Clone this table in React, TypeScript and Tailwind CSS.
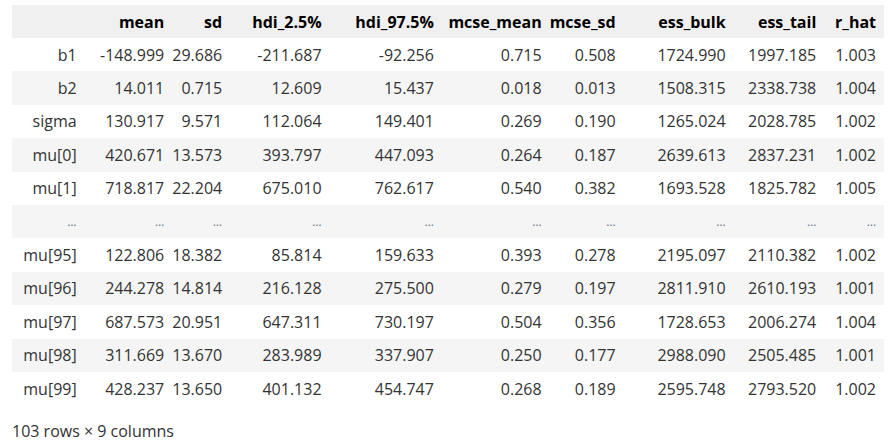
const columns = ["mean", "sd", "hdi_2.5%", "hdi_97.5%", "mcse_mean", "mcse_sd", "ess_bulk", "ess_tail", "r_hat"];

const widths = [73, 88, 54, 100, 113, 108, 74, 111, 91, 60];

const rows: [string, string[]][] = [
  ["b1", ["-148.999", "29.686", "-211.687", "-92.256", "0.715", "0.508", "1724.990", "1997.185", "1.003"]],
  ["b2", ["14.011", "0.715", "12.609", "15.437", "0.018", "0.013", "1508.315", "2338.738", "1.004"]],
  ["sigma", ["130.917", "9.571", "112.064", "149.401", "0.269", "0.190", "1265.024", "2028.785", "1.002"]],
  ["mu[0]", ["420.671", "13.573", "393.797", "447.093", "0.264", "0.187", "2639.613", "2837.231", "1.002"]],
  ["mu[1]", ["718.817", "22.204", "675.010", "762.617", "0.540", "0.382", "1693.528", "1825.782", "1.005"]],
  ["...", ["...", "...", "...", "...", "...", "...", "...", "...", "..."]],
  ["mu[95]", ["122.806", "18.382", "85.814", "159.633", "0.393", "0.278", "2195.097", "2110.382", "1.002"]],
  ["mu[96]", ["244.278", "14.814", "216.128", "275.500", "0.279", "0.197", "2811.910", "2610.193", "1.001"]],
  ["mu[97]", ["687.573", "20.951", "647.311", "730.197", "0.504", "0.356", "1728.653", "2006.274", "1.004"]],
  ["mu[98]", ["311.669", "13.670", "283.989", "337.907", "0.250", "0.177", "2988.090", "2505.485", "1.001"]],
  ["mu[99]", ["428.237", "13.650", "401.132", "454.747", "0.268", "0.189", "2595.748", "2793.520", "1.002"]],
];

function Cell({ text }: { text: string }) {
  if (text === "...") {
    return <td className="pr-2 text-right text-[12px] text-gray-500">…</td>;
  }
  return <td className="pr-2 text-right whitespace-nowrap">{text}</td>;
}

export default function App() {
  return (
    <div
      className="min-h-screen bg-white px-3 pt-[5px] text-[16px] text-[#333]"
      style={{ fontFamily: '"Segoe UI", "Open Sans", "Noto Sans", sans-serif' }}
    >
      <table className="table-fixed border-collapse">
        <colgroup>
          {widths.map((w, i) => (
            <col key={i} style={{ width: w }} />
          ))}
        </colgroup>
        <thead>
          <tr className="h-[33px] bg-[#f0f0f0]">
            <th />
            {columns.map((c) => (
              <th key={c} className="pr-2 text-right font-bold text-black whitespace-nowrap">
                {c}
              </th>
            ))}
          </tr>
        </thead>
        <tbody>
          {rows.map(([name, vals], i) => (
            <tr key={name + i} className={i % 2 === 1 ? "h-[33.4px] bg-[#f5f5f5]" : "h-[33.4px] bg-white"}>
              <Cell text={name} />
              {vals.map((v, j) => (
                <Cell key={j} text={v} />
              ))}
            </tr>
          ))}
        </tbody>
      </table>
      <p className="mt-[14px]">103 rows × 9 columns</p>
    </div>
  );
}
